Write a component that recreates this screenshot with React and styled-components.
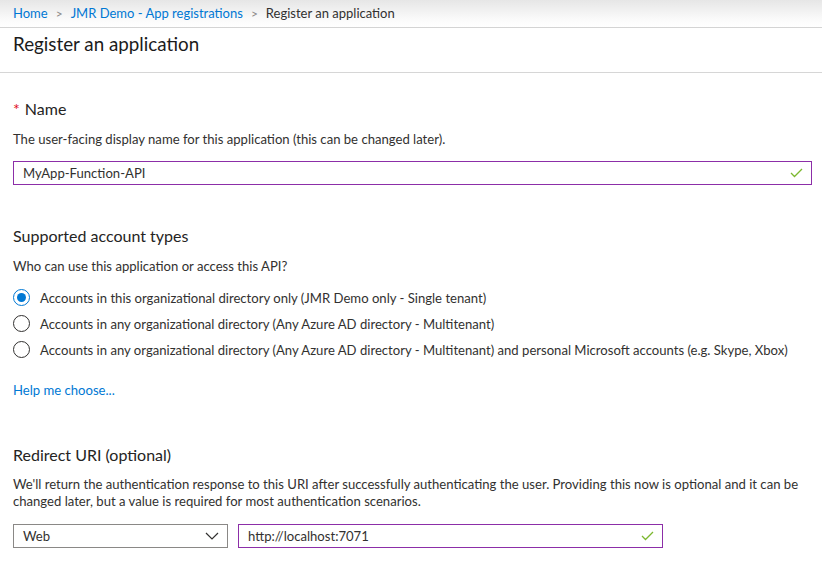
import React from "react";
import styled, { createGlobalStyle } from "styled-components";

const Global = createGlobalStyle`
  html, body { margin: 0; padding: 0; background: #fff; }
  body { font-family: "Segoe UI", Lato, "Noto Sans", sans-serif; color: #323130; }
  * { box-sizing: border-box; }
`;

const Page = styled.div`
  width: 822px;
  height: 563px;
  overflow: hidden;
  display: flex;
  flex-direction: column;
`;

const Crumbs = styled.nav`
  height: 28px;
  background: linear-gradient(#e6e6e6, #fafafa 70%, #fff);
  border-bottom: 1px solid #d4d4d4;
  display: flex;
  align-items: center;
  gap: 8px;
  padding: 0 13px 1px;
  font-size: 13px;
`;

const Crumb = styled.a`
  color: ${(p) => (p.$current ? "#323130" : "#0078d4")};
  text-decoration: none;
`;

const Sep = styled.span`
  color: #8a8886;
  font-size: 12px;
`;

const TitleBar = styled.header`
  height: 45px;
  border-bottom: 1px solid #d6d6d6;
  padding: 4px 13px 0;
`;

const Title = styled.h1`
  margin: 0;
  font-size: 18.8px;
  font-weight: 400;
  line-height: 24px;
  color: #1b1b1b;
`;

const Body = styled.main`
  padding: 0 13px;
  display: flex;
  flex-direction: column;
`;

const Heading = styled.h2`
  margin: ${(p) => p.$top}px 0 0;
  font-size: 16px;
  font-weight: 400;
  line-height: 22px;
  color: #252423;
`;

const Star = styled.span`
  color: #e00b1c;
  margin-right: 5px;
`;

const Desc = styled.p`
  margin: ${(p) => p.$top}px 0 0;
  font-size: 13.1px;
  line-height: 17px;
  color: #323130;
`;

const FieldBox = styled.div`
  margin-top: ${(p) => p.$top || 0}px;
  width: ${(p) => p.$w}px;
  height: 24px;
  border: 1px solid ${(p) => (p.$valid ? "#8c2ea8" : "#8a8886")};
  display: flex;
  align-items: center;
  justify-content: space-between;
  padding: 0 8px 0 9px;
  font-size: 13.1px;
  color: #323130;
`;

const Radios = styled.div`
  margin-top: 14px;
  display: flex;
  flex-direction: column;
  gap: 9px;
`;

const RadioRow = styled.label`
  display: flex;
  align-items: center;
  gap: 10px;
  height: 17px;
  font-size: 13.1px;
`;

const Circle = styled.span`
  width: 17px;
  height: 17px;
  border-radius: 50%;
  border: 1px solid ${(p) => (p.$on ? "#0078d4" : "#323130")};
  display: flex;
  align-items: center;
  justify-content: center;
  flex: none;
  &::after {
    content: "";
    width: 9px;
    height: 9px;
    border-radius: 50%;
    background: ${(p) => (p.$on ? "#0078d4" : "transparent")};
  }
`;

const Link = styled.a`
  margin-top: 24px;
  font-size: 13.1px;
  line-height: 17px;
  color: #0078d4;
  text-decoration: none;
`;

const Row = styled.div`
  margin-top: 14px;
  display: flex;
  gap: 10px;
`;

const Check = () => (
  <svg width="13" height="10" viewBox="0 0 13 10">
    <path d="M1 5 L4.5 8.5 L12 1" fill="none" stroke="#7cb82f" strokeWidth="1.3" />
  </svg>
);

const Chevron = () => (
  <svg width="14" height="8" viewBox="0 0 14 8">
    <path d="M1 1 L7 7 L13 1" fill="none" stroke="#323130" strokeWidth="1.2" />
  </svg>
);

export default function App() {
  return (
    <Page>
      <Global />
      <Crumbs>
        <Crumb href="#">Home</Crumb>
        <Sep>&gt;</Sep>
        <Crumb href="#">JMR Demo - App registrations</Crumb>
        <Sep>&gt;</Sep>
        <Crumb $current>Register an application</Crumb>
      </Crumbs>
      <TitleBar>
        <Title>Register an application</Title>
      </TitleBar>
      <Body>
        <Heading $top={25}>
          <Star>*</Star>Name
        </Heading>
        <Desc $top={11}>The user-facing display name for this application (this can be changed later).</Desc>
        <FieldBox $valid $w={799} $top={13}>
          <span>MyApp-Function-API</span>
          <Check />
        </FieldBox>
        <Heading $top={40}>Supported account types</Heading>
        <Desc $top={11}>Who can use this application or access this API?</Desc>
        <Radios>
          <RadioRow>
            <Circle $on />
            Accounts in this organizational directory only (JMR Demo only - Single tenant)
          </RadioRow>
          <RadioRow>
            <Circle />
            Accounts in any organizational directory (Any Azure AD directory - Multitenant)
          </RadioRow>
          <RadioRow>
            <Circle />
            Accounts in any organizational directory (Any Azure AD directory - Multitenant) and personal Microsoft accounts (e.g. Skype, Xbox)
          </RadioRow>
        </Radios>
        <Link href="#">Help me choose...</Link>
        <Heading $top={45}>Redirect URI (optional)</Heading>
        <Desc $top={10}>
          We'll return the authentication response to this URI after successfully authenticating the user. Providing this now is optional and it can be
          changed later, but a value is required for most authentication scenarios.
        </Desc>
        <Row>
          <FieldBox $w={215}>
            <span>Web</span>
            <Chevron />
          </FieldBox>
          <FieldBox $valid $w={425}>
            <span>http://localhost:7071</span>
            <Check />
          </FieldBox>
        </Row>
      </Body>
    </Page>
  );
}
